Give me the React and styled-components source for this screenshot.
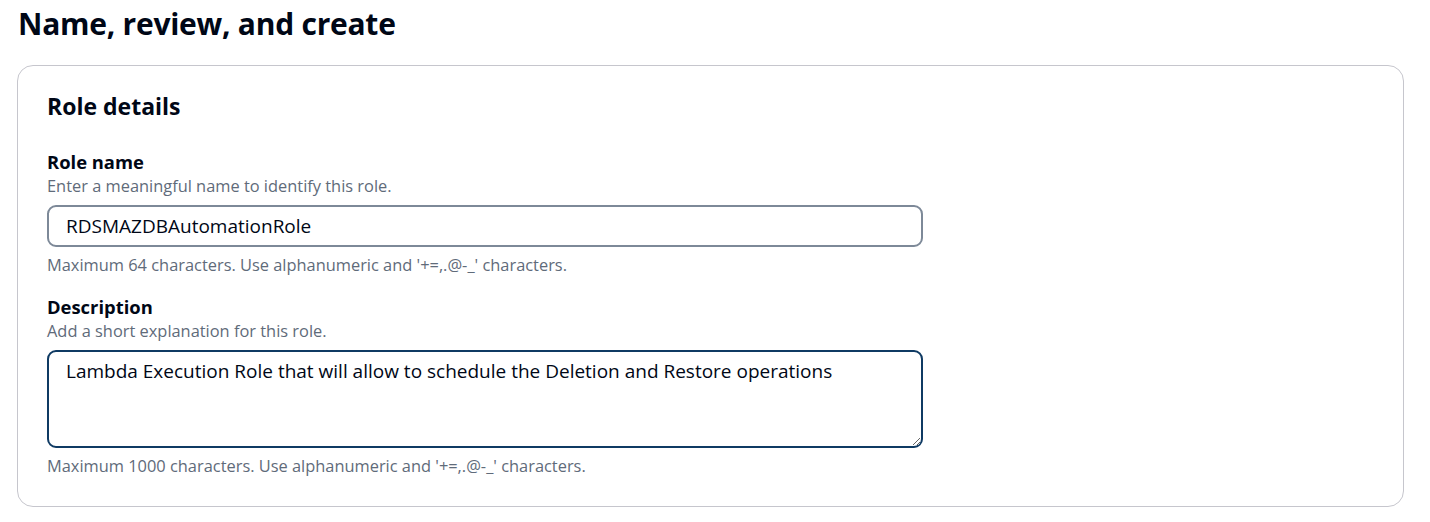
import React from 'react';
import styled, { createGlobalStyle } from 'styled-components';

const GlobalStyle = createGlobalStyle`
  body {
    margin: 0;
    background: #fff;
    font-family: "Open Sans", "Noto Sans", sans-serif;
    color: #000716;
  }
`;

const Page = styled.div`
  padding: 4px 26px 16px 17px;
`;

const PageTitle = styled.h1`
  margin: 0 0 21px 1px;
  font-size: 30px;
  line-height: 40px;
  font-weight: 700;
  letter-spacing: -0.25px;
`;

const Container = styled.section`
  border: 1.5px solid #c6c6cd;
  border-radius: 16px;
  padding: 25px 29px 29px;
`;

const SectionTitle = styled.h2`
  margin: 0 0 29px;
  font-size: 23px;
  line-height: 30px;
  font-weight: 700;
`;

const Field = styled.div`
  width: 876px;
  margin-bottom: ${(p) => p.gap || 0}px;
`;

const Label = styled.div`
  font-size: 18.4px;
  line-height: 24px;
  font-weight: 700;
`;

const Hint = styled.div`
  font-size: 16.4px;
  line-height: 22px;
  color: #5f6b7a;
  margin-top: ${(p) => p.top || 0}px;
`;

const Input = styled.input`
  display: block;
  box-sizing: border-box;
  width: 100%;
  height: 42px;
  margin: 8px 0 0;
  padding: 0 17px;
  border: 2px solid #7d8998;
  border-radius: 9px;
  font-family: inherit;
  font-size: 19px;
  color: #000716;
  outline: none;
`;

const TextArea = styled.textarea`
  display: block;
  box-sizing: border-box;
  width: 100%;
  height: 98px;
  margin: 8px 0 0;
  padding: 7px 17px;
  border: 2px solid #0f3a63;
  border-radius: 9px;
  font-family: inherit;
  font-size: 19px;
  line-height: 24px;
  color: #000716;
  outline: none;
  resize: vertical;
`;

export default function App() {
  return (
    <Page>
      <GlobalStyle />
      <PageTitle>Name, review, and create</PageTitle>
      <Container>
        <SectionTitle>Role details</SectionTitle>
        <Field gap={19}>
          <Label>Role name</Label>
          <Hint top={1}>Enter a meaningful name to identify this role.</Hint>
          <Input defaultValue="RDSMAZDBAutomationRole" />
          <Hint top={7}>Maximum 64 characters. Use alphanumeric and '+=,.@-_' characters.</Hint>
        </Field>
        <Field>
          <Label>Description</Label>
          <Hint top={1}>Add a short explanation for this role.</Hint>
          <TextArea defaultValue="Lambda Execution Role that will allow to schedule the Deletion and Restore operations" />
          <Hint top={7}>Maximum 1000 characters. Use alphanumeric and '+=,.@-_' characters.</Hint>
        </Field>
      </Container>
    </Page>
  );
}
